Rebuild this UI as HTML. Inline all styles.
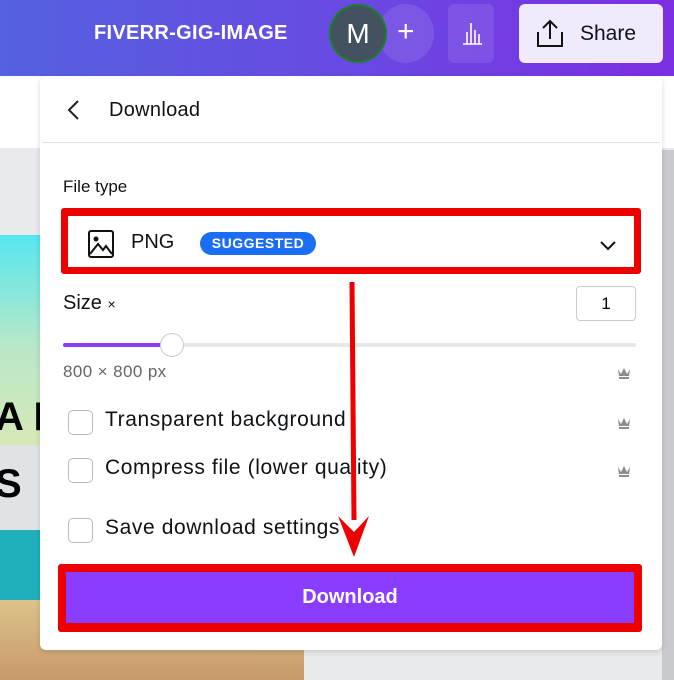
<!DOCTYPE html>
<html><head><meta charset="utf-8"><style>
*{margin:0;padding:0;box-sizing:border-box}
body{width:674px;height:680px;overflow:hidden;position:relative;font-family:"Liberation Sans",sans-serif;background:#e9eaee}
.hdr{position:absolute;left:0;top:0;width:674px;height:76px;background:linear-gradient(90deg,#5461e0,#6a48e2 55%,#7c2ee2)}
.abs{position:absolute}
.txt{color:#0e1318}
.cb{letter-spacing:.6px}
</style></head><body>
<div class="hdr"></div>
<div class="abs" style="left:94px;top:22px;color:#fff;font-weight:bold;font-size:20px;letter-spacing:.3px">FIVERR-GIG-IMAGE</div>
<div class="abs" style="left:378px;top:4px;width:56px;height:59px;border-radius:50%;background:rgba(255,255,255,0.1)"></div>
<div class="abs" style="left:397px;top:14px;color:#fff;font-size:30px;line-height:36px">+</div>
<div class="abs" style="left:329px;top:4px;width:58px;height:59px;border-radius:50%;background:#445260;border:2px solid #18802a;color:#fff;font-size:28px;text-align:center;line-height:55px">M</div>
<div class="abs" style="left:448px;top:4px;width:46px;height:59px;border-radius:6px;background:rgba(255,255,255,0.1)"></div>
<svg class="abs" style="left:460px;top:18px" width="24" height="28"><path d="M3 26H22M7 26V14M11 26V5M15 26V12M19 26V16" stroke="#fff" stroke-width="1.6" fill="none"/></svg>
<div class="abs" style="left:519px;top:4px;width:144px;height:59px;border-radius:6px;background:#f1eafc"></div>
<svg class="abs" style="left:535px;top:18px" width="30" height="30"><path d="M3 14V28H27V14M15 21V3M8 10L15 3 22 10" stroke="#111" stroke-width="2" fill="none"/></svg>
<div class="abs txt" style="left:580px;top:22px;font-size:21px">Share</div>
<div class="abs" style="left:0;top:76px;width:674px;height:72px;background:#fff"></div>
<div class="abs" style="left:0;top:235px;width:304px;height:445px;background:linear-gradient(180deg,#56e6f0 0%,#b8e8c8 25%,#f0e8a8 65%,#c89a6a 100%)"></div>
<div class="abs" style="left:0;top:445px;width:40px;height:110px;background:#dfe3e6"></div>
<div class="abs" style="left:0;top:530px;width:40px;height:70px;background:#20b0bc"></div>
<div class="abs" style="left:-5px;top:395px;font-size:40px;font-weight:bold;color:#000">A P</div>
<div class="abs" style="left:-5px;top:462px;font-size:40px;font-weight:bold;color:#000">S</div>
<div class="abs" style="left:662px;top:150px;width:12px;height:530px;background:#c9cacd"></div>
<div class="abs" style="left:40px;top:76px;width:622px;height:574px;background:#fff;border-radius:6px;box-shadow:0 2px 6px rgba(0,0,0,.15)"></div>
<svg class="abs" style="left:64px;top:98px" width="20" height="26"><path d="M14 3L5 12 14 21" stroke="#222" stroke-width="2" fill="none"/></svg>
<div class="abs txt" style="left:109px;top:99px;font-size:20px;letter-spacing:.3px">Download</div>
<div class="abs" style="left:42px;top:142px;width:618px;height:1px;background:#dfe1e4"></div>
<div class="abs txt" style="left:63px;top:177px;font-size:17px">File type</div>
<div class="abs" style="left:61px;top:208px;width:580px;height:66px;background:#e00;border-radius:3px"></div>
<div class="abs" style="left:68px;top:216px;width:566px;height:51px;background:#fff"></div>
<svg class="abs" style="left:87px;top:229px" width="28" height="30"><rect x="2" y="2" width="24" height="26" rx="2" stroke="#111" stroke-width="2" fill="none"/><circle cx="9" cy="10" r="2.5" fill="#111"/><path d="M3 25L11 15 16 21 19 17 25 25" stroke="#111" stroke-width="2" fill="none"/></svg>
<div class="abs txt" style="left:131px;top:231px;font-size:20px">PNG</div>
<div class="abs" style="left:200px;top:232px;width:116px;height:23px;border-radius:12px;background:#1b6ef3;color:#fff;font-weight:bold;font-size:14px;text-align:center;line-height:23px;letter-spacing:.5px">SUGGESTED</div>
<svg class="abs" style="left:598px;top:238px" width="20" height="14"><path d="M3 4L10 11 17 4" stroke="#111" stroke-width="2" fill="none"/></svg>
<div class="abs txt" style="left:63px;top:292px;font-size:20px">Size <span style="font-size:14px">×</span></div>
<div class="abs" style="left:576px;top:286px;width:60px;height:35px;border:1px solid #c8cbd0;border-radius:4px;font-size:17px;text-align:center;line-height:33px">1</div>
<div class="abs" style="left:63px;top:343px;width:573px;height:4px;background:#e6e8ea;border-radius:2px"></div>
<div class="abs" style="left:63px;top:343px;width:110px;height:4px;background:#8b3dff;border-radius:2px"></div>
<div class="abs" style="left:160px;top:333px;width:24px;height:24px;border-radius:50%;background:#fff;border:1px solid #c8cbd0"></div>
<div class="abs" style="left:63px;top:362px;font-size:17px;color:#666;letter-spacing:.4px">800 × 800 px</div>
<div class="abs" style="left:68px;top:410px;width:25px;height:25px;border:1.5px solid #b8bcc2;border-radius:5px"></div>
<div class="abs txt cb" style="left:105px;top:408px;font-size:21px">Transparent background</div>
<div class="abs" style="left:68px;top:458px;width:25px;height:25px;border:1.5px solid #b8bcc2;border-radius:5px"></div>
<div class="abs txt cb" style="left:105px;top:456px;font-size:21px">Compress file (lower quality)</div>
<div class="abs" style="left:68px;top:518px;width:25px;height:25px;border:1.5px solid #b8bcc2;border-radius:5px"></div>
<div class="abs txt cb" style="left:105px;top:516px;font-size:21px">Save download settings</div>
<svg class="abs" style="left:616px;top:366px" width="16" height="14"><path d="M2 3L5 8 8 2 11 8 14 3 13 10H3Z M3 11H13V13H3Z" fill="#8a8d92"/></svg>
<svg class="abs" style="left:616px;top:416px" width="16" height="14"><path d="M2 3L5 8 8 2 11 8 14 3 13 10H3Z M3 11H13V13H3Z" fill="#8a8d92"/></svg>
<svg class="abs" style="left:616px;top:464px" width="16" height="14"><path d="M2 3L5 8 8 2 11 8 14 3 13 10H3Z M3 11H13V13H3Z" fill="#8a8d92"/></svg>
<div class="abs" style="left:58px;top:564px;width:584px;height:68px;background:#e00;border-radius:3px"></div>
<div class="abs" style="left:66px;top:572px;width:568px;height:51px;background:#8b3dff;color:#fff;font-weight:bold;font-size:20px;text-align:center;line-height:51px">Download</div>
<svg class="abs" style="left:330px;top:280px" width="44" height="280"><path d="M22 2L24 240" stroke="#e00" stroke-width="5"/><path d="M8 236L24 277 39 236 24 252Z" fill="#e00"/></svg>
</body></html>
